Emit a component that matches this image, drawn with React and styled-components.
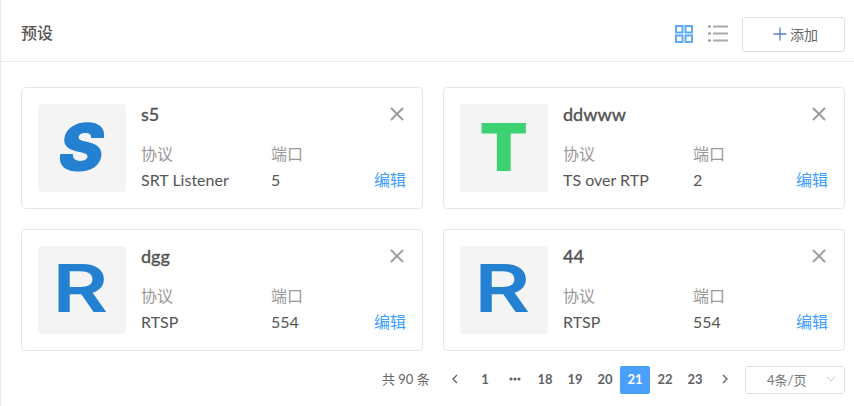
import React from "react";
import styled, { createGlobalStyle } from "styled-components";

const Global = createGlobalStyle`
  html, body { margin: 0; padding: 0; background: #fff; }
  body { width: 854px; height: 406px; overflow: hidden; font-family: Lato, "Noto Sans CJK SC", sans-serif; color: #555; }
`;

const Page = styled.div`
  width: 854px;
  height: 406px;
  box-sizing: border-box;
  border-left: 1px solid #e9eaf0;
  display: flex;
  flex-direction: column;
`;
const Header = styled.header`
  height: 62px;
  box-sizing: border-box;
  border-bottom: 1px solid #e6e8ee;
  display: flex;
  align-items: center;
  padding: 7px 9px 0 20px;
  flex: none;
`;
const Title = styled.h1`
  margin: 0;
  padding-bottom: 4px;
  flex: 1;
  font-size: 16px;
  font-weight: 500;
  color: #555;
`;
const ViewIcon = styled.svg`
  width: 20px;
  height: 20px;
  margin-right: 14px;
  flex: none;
  display: block;
`;
const AddButton = styled.button`
  width: 103px;
  height: 35px;
  box-sizing: border-box;
  border: 1px solid #dcdfe6;
  border-radius: 3px;
  background: #fff;
  display: flex;
  align-items: center;
  justify-content: center;
  gap: 3px;
  font: 14px Lato, "Noto Sans CJK SC", sans-serif;
  color: #666;
  padding: 0 0 1px 4px;
`;
const Grid = styled.main`
  display: grid;
  grid-template-columns: 402px 402px;
  grid-auto-rows: 122px;
  gap: 20px;
  padding: 25px 0 0 20px;
`;
const Card = styled.article`
  box-sizing: border-box;
  border: 1px solid #e4e6ef;
  border-radius: 4px;
  padding: 16px;
  display: flex;
  gap: 15px;
`;
const Thumb = styled.div`
  width: 88px;
  height: 88px;
  flex: none;
  border-radius: 4px;
  background: #f4f4f5;
  display: flex;
  align-items: center;
  justify-content: center;
`;
const Letter = styled.span`
  font-family: Inter, sans-serif;
  font-weight: ${p => p.$weight};
  font-size: 66px;
  line-height: 1;
  color: ${p => p.$color};
  transform: ${p => p.$transform};
`;
const Body = styled.div`
  flex: 1;
  min-width: 0;
  position: relative;
  display: flex;
  flex-direction: column;
`;
const Name = styled.div`
  font-size: 18px;
  font-weight: 500;
  -webkit-text-stroke: 0.3px #555;
  line-height: 20px;
  color: #555;
`;
const Meta = styled.div`
  display: grid;
  grid-template-columns: 130px 1fr auto;
  margin-top: 17px;
  align-items: end;
`;
const Label = styled.div`
  font-size: 16px;
  line-height: 26px;
  color: #999;
`;
const Value = styled.div`
  font-size: 16px;
  line-height: 25px;
  color: #555;
`;
const Edit = styled.a`
  font-size: 16px;
  line-height: 25px;
  color: #409eff;
  margin-left: -1px;
`;
const Close = styled.svg`
  position: absolute;
  top: 3px;
  right: 2px;
  width: 14px;
  height: 14px;
`;
const Pager = styled.nav`
  display: flex;
  align-items: center;
  margin-top: 14px;
  padding-left: 381px;
  height: 30px;
  font-size: 14px;
  color: #666;
`;
const Total = styled.span`
  width: 58px;
  font-size: 13px;
  white-space: nowrap;
  padding-bottom: 3px;
`;
const PageItem = styled.span`
  width: 30px;
  height: 28px;
  box-sizing: border-box;
  padding-bottom: 3px;
  border-radius: 2px;
  display: flex;
  align-items: center;
  justify-content: center;
  font-size: 13px;
  font-weight: 700;
  background: ${p => (p.$active ? "#4ba0fb" : "transparent")};
  color: ${p => (p.$active ? "#fff" : "#606266")};
`;
const SizeSelect = styled.div`
  width: 100px;
  height: 28px;
  margin-left: 5px;
  box-sizing: border-box;
  border: 1px solid #dcdfe6;
  border-radius: 3px;
  display: flex;
  align-items: center;
  padding: 0 8px 2px 21px;
  font-size: 13px;
  color: #777;
  justify-content: space-between;
`;

const GridIcon = () => (
  <ViewIcon viewBox="0 0 20 20" fill="none" stroke="#5aaaf8" strokeWidth="2">
    <rect x="2" y="2" width="6.5" height="6.5" />
    <rect x="11.5" y="2" width="6.5" height="6.5" />
    <rect x="2" y="11.5" width="6.5" height="6.5" />
    <rect x="11.5" y="11.5" width="6.5" height="6.5" />
  </ViewIcon>
);
const ListIcon = () => (
  <ViewIcon viewBox="0 0 20 20" fill="none" stroke="#aaa" strokeWidth="1.8">
    <path d="M5 2.500h15M5 9.500h15M5 16.500h15" />
    <path d="M0 2.500h3M0 9.500h3M0 16.500h3" stroke="#999" strokeWidth="2.200" />
  </ViewIcon>
);
const CloseIcon = () => (
  <Close viewBox="0 0 14 14" fill="none" stroke="#999" strokeWidth="1.800">
    <path d="M1 1l12 12M13 1L1 13" />
  </Close>
);
const Chevron = ({ d }) => (
  <svg width="8" height="10" viewBox="0 0 8 10" fill="none" stroke="#666" strokeWidth="1.400">
    <path d={d} />
  </svg>
);
const Dots = () => (
  <svg width="12" height="4" viewBox="0 0 12 4" fill="#606266">
    <circle cx="2" cy="2" r="1.600" />
    <circle cx="6" cy="2" r="1.600" />
    <circle cx="10" cy="2" r="1.600" />
  </svg>
);

const logos = {
  S: { $color: "#2481d2", $weight: 900, $transform: "scale(1.03,1) skewX(-10deg) translateY(-1px)" },
  T: { $color: "#3cd274", $weight: 900, $transform: "scale(1.06,1) translateY(-1px)" },
  R: { $color: "#2481d2", $weight: 600, $transform: "scale(1.3,1) translate(-1px,-2px)" },
};

const items = [
  { name: "s5", logo: "S", proto: "SRT Listener", port: "5" },
  { name: "ddwww", logo: "T", proto: "TS over RTP", port: "2" },
  { name: "dgg", logo: "R", proto: "RTSP", port: "554" },
  { name: "44", logo: "R", proto: "RTSP", port: "554" },
];

const pages = ["1", "dots", "18", "19", "20", "21", "22", "23"];

export default function App() {
  return (
    <Page>
      <Global />
      <Header>
        <Title>预设</Title>
        <GridIcon />
        <ListIcon />
        <AddButton>
          <svg width="14" height="14" viewBox="0 0 14 14" fill="none" stroke="#5b7fc0" strokeWidth="1.300">
            <path d="M7 0.500v13M0.500 7h13" />
          </svg>
          添加
        </AddButton>
      </Header>
      <Grid>
        {items.map(it => (
          <Card key={it.name}>
            <Thumb>
              <Letter {...logos[it.logo]}>{it.logo}</Letter>
            </Thumb>
            <Body>
              <Name>{it.name}</Name>
              <CloseIcon />
              <Meta>
                <Label>协议</Label>
                <Label>端口</Label>
                <span />
                <Value>{it.proto}</Value>
                <Value>{it.port}</Value>
                <Edit>编辑</Edit>
              </Meta>
            </Body>
          </Card>
        ))}
      </Grid>
      <Pager>
        <Total>共 90 条</Total>
        <PageItem><Chevron d="M6 1L2 5l4 4" /></PageItem>
        {pages.map(p => (
          <PageItem key={p} $active={p === "21"}>{p === "dots" ? <Dots /> : p}</PageItem>
        ))}
        <PageItem><Chevron d="M2 1l4 4-4 4" /></PageItem>
        <SizeSelect>
          4条/页
          <svg width="10" height="6" viewBox="0 0 10 6" fill="none" stroke="#c0c4cc" strokeWidth="1">
            <path d="M1 1l4 4 4-4" />
          </svg>
        </SizeSelect>
      </Pager>
    </Page>
  );
}
